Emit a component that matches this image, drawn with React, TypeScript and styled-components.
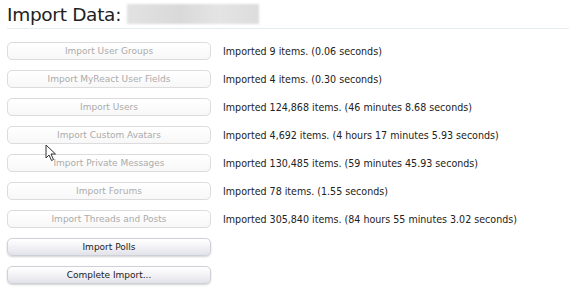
import React from "react";
import styled, { createGlobalStyle } from "styled-components";

const Global = createGlobalStyle`
  html, body { margin: 0; padding: 0; background: #fff; }
  body { font-family: Tahoma, "DejaVu Sans", Verdana, sans-serif; }
`;

const Page = styled.div`
  position: relative;
  width: 569px;
  height: 300px;
  overflow: hidden;
  padding: 0 0 0 7px;
  box-sizing: border-box;
`;

const Header = styled.div`
  display: flex;
  align-items: center;
  gap: 6px;
  height: 28px;
  border-bottom: 1px solid #e6edf0;
`;

const Title = styled.h1`
  margin: 0;
  font-family: "DejaVu Sans", sans-serif;
  font-weight: normal;
  font-size: 18.5px;
  color: #222;
  letter-spacing: -0.3px;
`;

const Blur = styled.div`
  width: 132px;
  height: 20px;
  background: linear-gradient(90deg, #e2e2e2, #d9d9d9 40%, #e4e4e4 70%, #dcdcdc);
  filter: blur(1px);
`;

const List = styled.div`
  display: flex;
  flex-direction: column;
  gap: 10px;
  padding-top: 13px;
`;

const Row = styled.div`
  display: flex;
  align-items: center;
  gap: 12px;
  height: 18px;
`;

const Button = styled.button<{ $active?: boolean }>`
  width: 204px;
  height: 18px;
  padding: 0;
  border-radius: 5px;
  font-family: "DejaVu Sans", sans-serif;
  font-size: 9px;
  cursor: default;
  color: ${(p) => (p.$active ? "#222" : "#ababab")};
  border: 1px solid ${(p) => (p.$active ? "#d0d0d8" : "#dcdcdc")};
  background: ${(p) =>
    p.$active
      ? "linear-gradient(#ffffff, #f2f2f6 50%, #e2e2ea)"
      : "linear-gradient(#ffffff, #f7f7f7)"};
  box-shadow: ${(p) => (p.$active ? "0 1px 2px rgba(0,0,0,0.18)" : "none")};
`;

const Result = styled.span`
  font-family: "DejaVu Sans Condensed", "DejaVu Sans", sans-serif;
  font-size: 10.6px;
  color: #222;
  white-space: nowrap;
`;

const Cursor = styled.svg`
  position: absolute;
  left: 45px;
  top: 144px;
`;

const rows: { label: string; result?: string; active?: boolean }[] = [
  { label: "Import User Groups", result: "Imported 9 items. (0.06 seconds)" },
  { label: "Import MyReact User Fields", result: "Imported 4 items. (0.30 seconds)" },
  { label: "Import Users", result: "Imported 124,868 items. (46 minutes 8.68 seconds)" },
  { label: "Import Custom Avatars", result: "Imported 4,692 items. (4 hours 17 minutes 5.93 seconds)" },
  { label: "Import Private Messages", result: "Imported 130,485 items. (59 minutes 45.93 seconds)" },
  { label: "Import Forums", result: "Imported 78 items. (1.55 seconds)" },
  { label: "Import Threads and Posts", result: "Imported 305,840 items. (84 hours 55 minutes 3.02 seconds)" },
  { label: "Import Polls", active: true },
  { label: "Complete Import...", active: true },
];

export default function App() {
  return (
    <Page>
      <Global />
      <Header>
        <Title>Import Data:</Title>
        <Blur />
      </Header>
      <List>
        {rows.map((r) => (
          <Row key={r.label}>
            <Button $active={r.active}>{r.label}</Button>
            {r.result && <Result>{r.result}</Result>}
          </Row>
        ))}
      </List>
      <Cursor width="12" height="18" viewBox="0 0 12 18">
        <path d="M1 1 L1 14 L4 11 L6.5 16.5 L8.5 15.5 L6 10 L10.5 10 Z" fill="#fff" stroke="#333" strokeWidth="1" />
      </Cursor>
    </Page>
  );
}
